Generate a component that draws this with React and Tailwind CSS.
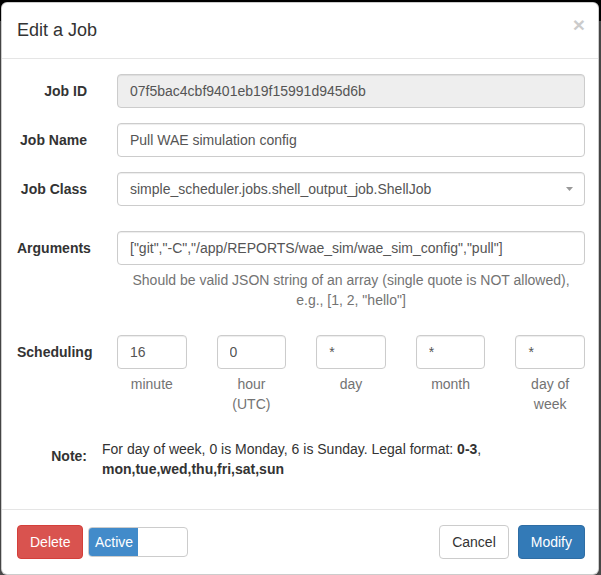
import React from 'react';

const inputClass =
  'block h-[34px] w-full rounded-[4px] border border-[#ccc] px-[12px] text-[14px] leading-[20px] text-[#555] shadow-[inset_0_1px_1px_rgba(0,0,0,0.075)] outline-none';

function FieldRow({ label, children, className = 'mb-[15px]' }) {
  return (
    <div className={`flex items-start ${className}`}>
      <label className="w-[70px] shrink-0 whitespace-nowrap pt-[7px] text-right text-[14px] font-bold leading-[20px] text-[#333]">
        {label}
      </label>
      <div className="ml-[30px] w-[468px]">{children}</div>
    </div>
  );
}

const schedule = [
  { value: '16', label: 'minute' },
  { value: '0', label: 'hour (UTC)' },
  { value: '*', label: 'day' },
  { value: '*', label: 'month' },
  { value: '*', label: 'day of week' }
];

export default function App() {
  return (
    <div className="relative h-[575px] w-[601px] overflow-hidden bg-[#5a5a5a] font-[Liberation_Sans,Arial,sans-serif] text-[14px] text-[#333]">
      <div className="absolute left-0 top-0 h-[21px] w-full bg-black" />

      <div className="relative ml-[1px] mt-[2px] w-[598px] rounded-[6px] border border-black/20 bg-white shadow-[0_5px_15px_rgba(0,0,0,0.5)]">
        <div className="flex items-start justify-between border-b border-[#e5e5e5] px-[15px] py-[15px]">
          <h4 className="text-[18px] leading-[25px] text-[#333]">Edit a Job</h4>
          <button className="mr-[-2px] mt-[-4px] font-[Liberation_Sans,Arial,sans-serif] text-[21px] font-bold leading-none text-black opacity-20">×</button>
        </div>

        <div className="pb-[15px] pl-[15px] pr-[13px] pt-[15px]">
          <FieldRow label="Job ID">
            <input className={`${inputClass} bg-[#eee]`} readOnly value="07f5bac4cbf9401eb19f15991d945d6b" />
          </FieldRow>

          <FieldRow label="Job Name">
            <input className={`${inputClass} bg-white`} readOnly value="Pull WAE simulation config" />
          </FieldRow>

          <FieldRow label="Job Class" className="mb-[25px]">
            <div className={`${inputClass} flex items-center justify-between bg-white pr-[11px]`}>
              <span>simple_scheduler.jobs.shell_output_job.ShellJob</span>
              <svg width="7" height="4" viewBox="0 0 7 4">
                <polygon points="0,0 7,0 3.5,4" fill="#999" />
              </svg>
            </div>
          </FieldRow>

          <FieldRow label="Arguments">
            <input
              className={`${inputClass} bg-white`}
              readOnly
              value={'["git","-C","/app/REPORTS/wae_sim/wae_sim_config","pull"]'}
            />
            <p className="mb-[10px] mt-[5px] text-center leading-[20px] text-[#737373]">
              Should be valid JSON string of an array (single quote is NOT allowed), e.g., [1, 2, "hello"]
            </p>
          </FieldRow>

          <FieldRow label="Scheduling">
            <div className="grid grid-cols-5 gap-x-[30px]">
              {schedule.map((item) => (
                <div key={item.label}>
                  <input className={`${inputClass} bg-white`} readOnly value={item.value} />
                  <p className="mb-[10px] mt-[5px] text-center leading-[20px] text-[#737373]">{item.label}</p>
                </div>
              ))}
            </div>
          </FieldRow>

          <div className="mb-[15px] flex items-start">
            <label className="w-[70px] shrink-0 pt-[7px] text-right font-bold leading-[20px]">Note:</label>
            <p className="ml-[15px] w-[483px] leading-[20px]">
              For day of week, 0 is Monday, 6 is Sunday. Legal format: <b>0-3</b>,{' '}
              <b>mon,tue,wed,thu,fri,sat,sun</b>
            </p>
          </div>
        </div>

        <div className="flex items-center justify-between border-t border-[#e5e5e5] pb-[15px] pl-[15px] pr-[13px] pt-[15px]">
          <div className="flex items-center gap-[5px]">
            <button className="h-[34px] rounded-[4px] border border-[#d43f3a] bg-[#d9534f] px-[12px] leading-[20px] text-white">
              Delete
            </button>
            <div className="flex h-[30px] w-[100px] overflow-hidden rounded-[4px] border border-[#ccc] bg-white">
              <span className="flex w-[49px] items-center justify-center bg-[#428bca] text-white">Active</span>
            </div>
          </div>
          <div className="flex items-center gap-[9px]">
            <button className="h-[34px] rounded-[4px] border border-[#ccc] bg-white px-[12px] leading-[20px] text-[#333]">
              Cancel
            </button>
            <button className="h-[34px] rounded-[4px] border border-[#2e6da4] bg-[#337ab7] px-[12px] leading-[20px] text-white">
              Modify
            </button>
          </div>
        </div>
      </div>
    </div>
  );
}
